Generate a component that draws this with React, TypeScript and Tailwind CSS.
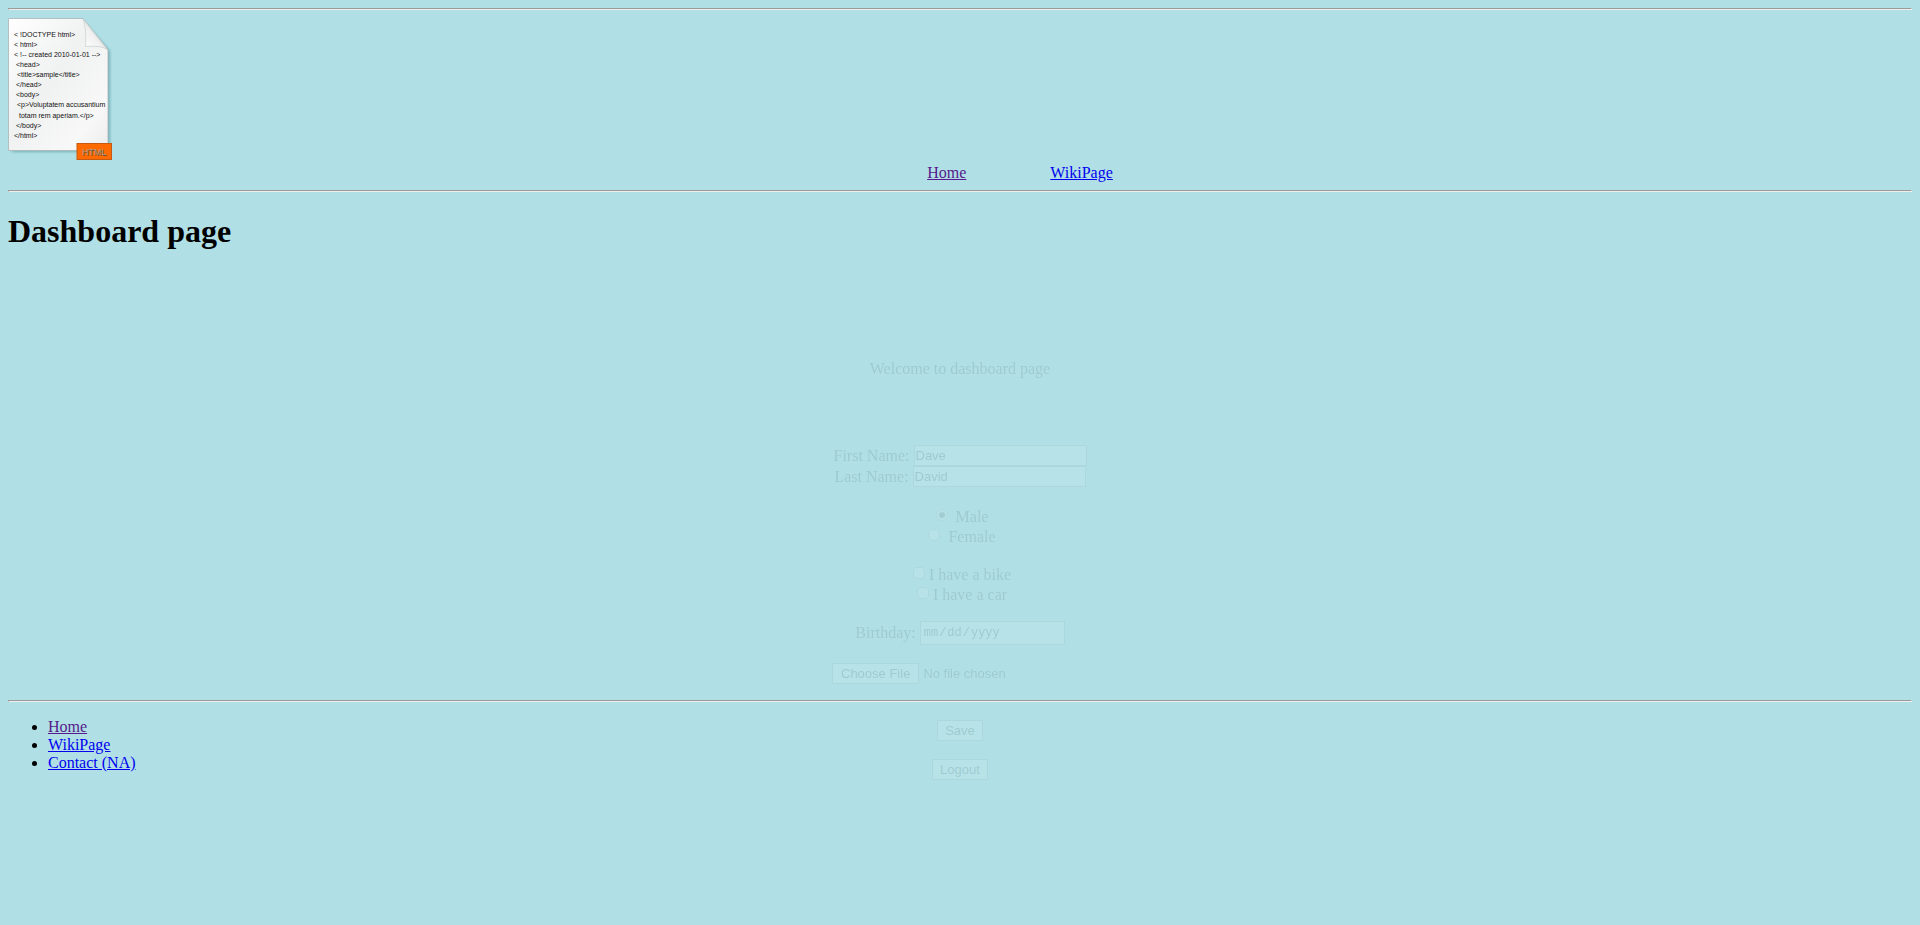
import type { ReactNode } from 'react';

const codeLines: { text: string; x: number; y: number }[] = [
  { text: '< !DOCTYPE html>', x: 6, y: 19 },
  { text: '< html>', x: 6, y: 29 },
  { text: '< !-- created 2010-01-01 -->', x: 6, y: 39 },
  { text: '<head>', x: 8, y: 49 },
  { text: '<title>sample</title>', x: 9, y: 59 },
  { text: '</head>', x: 8, y: 69 },
  { text: '<body>', x: 8, y: 79 },
  { text: '<p>Voluptatem accusantium', x: 9, y: 89 },
  { text: 'totam rem aperiam.</p>', x: 11, y: 100 },
  { text: '</body>', x: 8, y: 110 },
  { text: '</html>', x: 6, y: 120 },
];

function HtmlLogo() {
  return (
    <svg className="block h-[142px] w-[104px]" viewBox="0 0 104 142" role="img" aria-label="HTML document">
      <defs>
        <linearGradient id="paper" x1="0" y1="0" x2="1" y2="1">
          <stop offset="0" stopColor="#ffffff" />
          <stop offset="0.45" stopColor="#f0f1f1" />
          <stop offset="0.8" stopColor="#f8f8f8" />
          <stop offset="1" stopColor="#ececec" />
        </linearGradient>
        <linearGradient id="fold" x1="0" y1="1" x2="0.7" y2="0.3">
          <stop offset="0" stopColor="#ffffff" />
          <stop offset="0.6" stopColor="#f1f1f1" />
          <stop offset="1" stopColor="#c9cccc" />
        </linearGradient>
        <filter id="soft" x="-10%" y="-10%" width="120%" height="120%">
          <feGaussianBlur stdDeviation="1.6" />
        </filter>
      </defs>
      <path d="M4 6H78L102 33V134H4Z" fill="#4f9299" opacity="0.6" filter="url(#soft)" />
      <path d="M0.5 0.5H75L100 32V132.500H0.500Z" fill="url(#paper)" stroke="#a9b4b5" strokeWidth="0.8" />
      <path d="M75 0.500C78 8 78 20 77.500 28.500C86 28 95 28 100 32Z" fill="url(#fold)" stroke="#b5bcbd" strokeWidth="0.5" />
      {codeLines.map((line) => (
        <text
          key={line.y}
          x={line.x}
          y={line.y}
          fill="#111111"
          fontSize="7"
          fontFamily="'Liberation Sans', Arial, sans-serif"
        >
          {line.text}
        </text>
      ))}
      <rect x="69" y="125.500" width="34.500" height="16" fill="#ff6a00" stroke="#c65a12" strokeWidth="1" />
      <text x="74.500" y="137.500" fill="#5b4a3c" fontSize="9" fontFamily="'Liberation Sans', sans-serif">HTML</text>
      <text x="74" y="137" fill="#b39a80" fontSize="9" fontFamily="'Liberation Sans', sans-serif">HTML</text>
    </svg>
  );
}

function Rule() {
  return <hr className="border border-t-[#9a9a9a] border-r-[#eeeeee] border-b-[#eeeeee] border-l-[#9a9a9a]" />;
}

function TextLink({ visited, children }: { visited?: boolean; children: ReactNode }) {
  return (
    <a href="#" className={visited ? 'text-[#551a8b] underline' : 'text-[#0000ee] underline'}>
      {children}
    </a>
  );
}

const fieldClass =
  'h-[21px] w-[173px] border border-[#8a8a8a] bg-white px-px font-["Liberation_Sans",Arial,sans-serif] text-[13px] leading-4';
const buttonClass =
  'h-[21px] border border-[#8a8a8a] bg-white px-[7px] font-["Liberation_Sans",Arial,sans-serif] text-[13px] leading-4';
const radioClass =
  'mb-1 size-3 appearance-none rounded-full border border-[#999999] bg-white checked:bg-[radial-gradient(circle,#222222_2px,#ffffff_4px)]';
const checkClass =
  'mb-1 size-3 appearance-none rounded-sm border border-[#999999] bg-white checked:bg-[#333333]';

export default function App() {
  return (
    <div className='min-h-screen bg-[#b0e0e6] p-2 font-["Liberation_Serif","Times_New_Roman",serif] text-base leading-[18px] text-black'>
      <header>
        <Rule />
        <div className="pt-2">
          <HtmlLogo />
        </div>
        <nav className="pt-1 pb-2">
          <ul className="flex justify-center gap-1 pl-10">
            <li className="pl-20">
              <TextLink visited>Home</TextLink>
            </li>
            <li className="pl-20">
              <TextLink>WikiPage</TextLink>
            </li>
          </ul>
        </nav>
        <Rule />
      </header>

      <main className="h-[508px] pt-[21px]">
        <h1 className="text-[32px] leading-9 font-bold">Dashboard page</h1>
        <div className="relative z-10 mx-auto w-64 pt-[111px] opacity-10">
          <p className="text-center">Welcome to dashboard page</p>
          <form className="flex flex-col items-center pt-[67px]" onSubmit={(event) => event.preventDefault()}>
            <div className="flex items-center gap-1">
              <label htmlFor="first">First Name:</label>
              <input id="first" type="text" defaultValue="Dave" className={fieldClass} />
            </div>
            <div className="flex items-center gap-1">
              <label htmlFor="last">Last Name:</label>
              <input id="last" type="text" defaultValue="David" className={fieldClass} />
            </div>

            <div className="mt-5 flex h-5 items-center gap-2 pl-1">
              <input id="male" type="radio" name="gender" defaultChecked className={radioClass} />
              <label htmlFor="male">Male</label>
            </div>
            <div className="flex h-5 items-center gap-2 pl-1">
              <input id="female" type="radio" name="gender" className={radioClass} />
              <label htmlFor="female">Female</label>
            </div>

            <div className="mt-[18px] flex h-5 items-center gap-1 pl-1">
              <input id="bike" type="checkbox" className={checkClass} />
              <label htmlFor="bike">I have a bike</label>
            </div>
            <div className="flex h-5 items-center gap-1 pl-1">
              <input id="car" type="checkbox" className={checkClass} />
              <label htmlFor="car">I have a car</label>
            </div>

            <div className="mt-4 flex items-center gap-1">
              <label htmlFor="birthday">Birthday:</label>
              <input
                id="birthday"
                type="date"
                className='h-6 w-[145px] border border-[#8a8a8a] bg-white px-0.5 font-["Liberation_Mono",monospace] text-[12px] leading-4 [&::-webkit-calendar-picker-indicator]:hidden'
              />
            </div>

            <input
              type="file"
              aria-label="Choose a file"
              className='mt-[18px] h-[21px] w-64 font-["Liberation_Sans",Arial,sans-serif] text-[13px] leading-4 file:mr-1 file:h-[21px] file:border file:border-solid file:border-[#8a8a8a] file:bg-white file:px-2 file:leading-4'
            />

            <button type="submit" className={`${buttonClass} mt-9`}>
              Save
            </button>
            <button type="button" className={`${buttonClass} mt-[18px]`}>
              Logout
            </button>
          </form>
        </div>
      </main>

      <footer>
        <Rule />
        <ul className="list-disc pt-4 pl-10">
          <li>
            <TextLink visited>Home</TextLink>
          </li>
          <li>
            <TextLink>WikiPage</TextLink>
          </li>
          <li>
            <TextLink>Contact (NA)</TextLink>
          </li>
        </ul>
      </footer>
    </div>
  );
}
